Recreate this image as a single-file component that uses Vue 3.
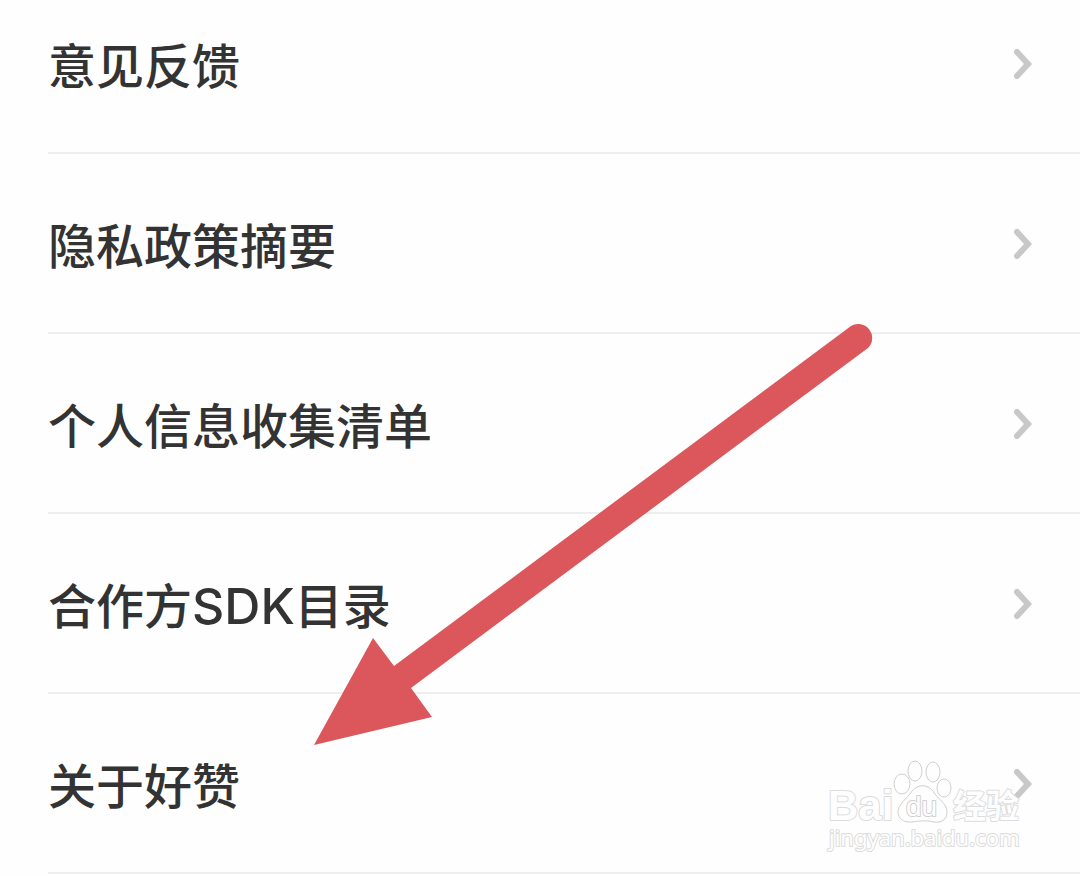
<script setup>
const items = [
  { lead: '意见反馈' },
  { lead: '隐私政策摘要' },
  { lead: '个人信息收集清单' },
  { lead: '合作方', latin: 'SDK', tail: '目录' },
  { lead: '关于好赞' },
]
</script>

<template>
  <main class="settings">
    <ul class="list">
      <li v-for="item in items" :key="item.lead" class="item">
        <a class="link" href="#">
          <span class="label">{{ item.lead }}<span v-if="item.latin" class="latin">{{ item.latin }}</span>{{ item.tail }}</span>
          <svg class="chevron" viewBox="0 0 24 36" aria-hidden="true">
            <path d="M6 6 L17 18 L6 30" />
          </svg>
        </a>
      </li>
    </ul>

    <svg class="arrow" viewBox="0 0 564 426" aria-hidden="true">
      <path d="M4 425 L63 318 L84 346 L541 6 A14 14 0 0 1 558 28 L101 368 L122 397 Z" />
    </svg>

    <svg class="watermark" viewBox="0 0 210 100" role="img" aria-label="Baidu 经验 jingyan.baidu.com">
      <text class="brand" x="8" y="60">Bai</text>
      <g class="paw">
        <ellipse cx="82" cy="24" rx="8" ry="10" />
        <ellipse cx="95" cy="11" rx="7" ry="10" />
        <ellipse cx="113" cy="12" rx="7" ry="10" />
        <ellipse cx="124" cy="28" rx="7" ry="9" />
        <path d="M92 31 C98 24 107 24 113 31 C117 39 127 43 127 52 C127 60 121 63 114 62 C106 60 99 61 92 62 C83 63 78 58 78 52 C78 44 87 39 92 31 Z" />
      </g>
      <text class="du" x="86" y="56">du</text>
      <text class="cn" x="133" y="58">经验</text>
      <text class="domain" x="9" y="86">jingyan.baidu.com</text>
    </svg>
  </main>
</template>

<style>
body {
  margin: 0;
  background: #fefefe;
}
</style>

<style scoped>
.settings {
  position: relative;
  overflow: hidden;
  font-family: Inter, "Noto Sans CJK SC", sans-serif;
  color: #333;
}
.list {
  margin: 0;
  padding: 0 0 0 48px;
  list-style: none;
}
.item {
  border-bottom: 2px solid #eee;
}
.link {
  display: flex;
  align-items: center;
  justify-content: space-between;
  padding: 57px 45px 49px 0;
  color: inherit;
  text-decoration: none;
}
.item:first-child .link {
  padding-top: 31px;
}
.label {
  font-size: 48px;
  font-weight: 500;
  line-height: 72px;
}
.latin {
  font-size: 50px;
  line-height: 1;
}
.chevron {
  width: 24px;
  height: 36px;
  margin-bottom: 6px;
  fill: none;
  stroke: #c8c8c8;
  stroke-width: 6;
  stroke-linecap: round;
  stroke-linejoin: miter;
}
.arrow {
  position: absolute;
  left: 310px;
  top: 320px;
  width: 564px;
  height: 426px;
  fill: #db575b;
  pointer-events: none;
}
.watermark {
  position: absolute;
  right: 50px;
  bottom: 14px;
  width: 210px;
  height: 100px;
  pointer-events: none;
  fill: #fefefe;
  stroke: #dcdcdc;
  stroke-width: 2;
  stroke-linejoin: round;
}
.watermark text {
  paint-order: stroke;
}
.brand {
  font: bold 42px "Liberation Sans", sans-serif;
}
.watermark .paw {
  stroke: #d0d0d0;
  stroke-width: 1;
}
.watermark .du {
  font: 28px "Liberation Sans", sans-serif;
  stroke: #d0d0d0;
}
.cn {
  font: 700 33px "Noto Sans CJK SC", sans-serif;
}
.domain {
  font: 400 22px "Noto Sans", sans-serif;
}
</style>
